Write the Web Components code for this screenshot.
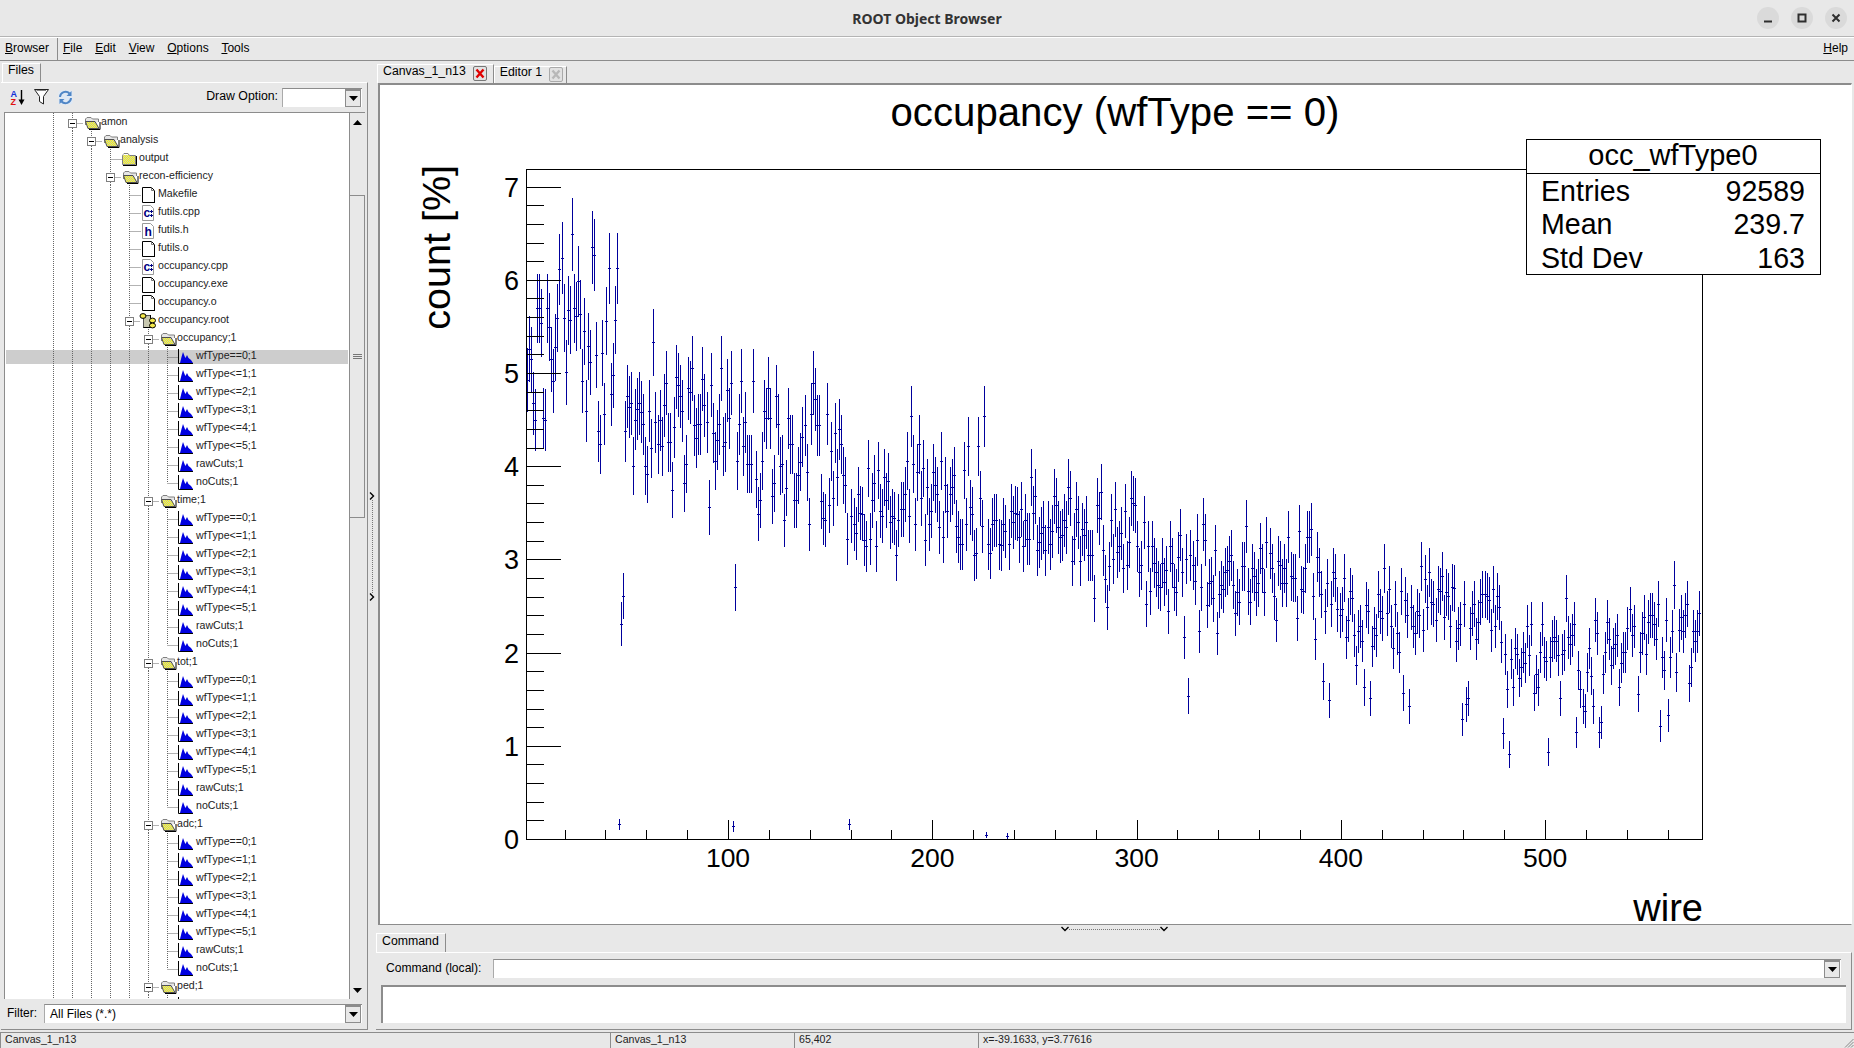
<!DOCTYPE html>
<html><head><meta charset="utf-8"><title>ROOT Object Browser</title>
<style>html,body{margin:0;padding:0;background:#e8e8e8;overflow:hidden}</style></head>
<body>
<x-window>
  <x-titlebar>ROOT Object Browser</x-titlebar>
  <x-menubar>
    <x-menu-item slot="first"><u>B</u>rowser</x-menu-item>
    <x-menu-item><u>F</u>ile</x-menu-item>
    <x-menu-item><u>E</u>dit</x-menu-item>
    <x-menu-item><u>V</u>iew</x-menu-item>
    <x-menu-item><u>O</u>ptions</x-menu-item>
    <x-menu-item><u>T</u>ools</x-menu-item>
    <x-menu-item slot="end"><u>H</u>elp</x-menu-item>
  </x-menubar>
  <x-workspace>
    <x-left-panel></x-left-panel>
    <x-vsplitter></x-vsplitter>
    <x-right-panel></x-right-panel>
  </x-workspace>
  <x-statusbar>
    <x-status-cell style="width:610px">Canvas_1_n13</x-status-cell>
    <x-status-cell style="width:184px">Canvas_1_n13</x-status-cell>
    <x-status-cell style="width:184px">65,402</x-status-cell>
    <x-status-cell style="flex:1">x=-39.1633, y=3.77616</x-status-cell>
  </x-statusbar>
</x-window>
<script>
const GRAY='#8c8c8c';
function def(name,html,init){
  customElements.define(name,class extends HTMLElement{
    constructor(){super();this.attachShadow({mode:'open'}).innerHTML=typeof html==='function'?html(this):html;}
    connectedCallback(){if(init&&!this._d){this._d=1;init(this);}}
  });
}
const TRI_DOWN='<svg width="9" height="5" viewBox="0 0 9 5"><path d="M0 0H9L4.5 5Z" fill="#000"/></svg>';
const TRI_UP='<svg width="9" height="5" viewBox="0 0 9 5"><path d="M0 5H9L4.5 0Z" fill="#000"/></svg>';

def('x-window',`<style>:host{display:flex;flex-direction:column;width:1854px;height:1048px;background:#e8e8e8;color:#000;font:12px "Liberation Sans",Arial,sans-serif;overflow:hidden}</style><slot></slot>`);

def('x-titlebar',`<style>
:host{display:flex;align-items:center;justify-content:center;height:36px;border-bottom:1px solid #b4b4b4;background:#e8e8e8;position:relative;box-sizing:content-box}
.t{font:bold 14px "Noto Sans",sans-serif;color:#333}
.w{position:absolute;right:7px;top:7px;display:flex;gap:12px}
.b{width:22px;height:22px;border-radius:50%;background:#dadada;display:flex;align-items:center;justify-content:center}
</style><span class="t"><slot></slot></span><div class="w">
<div class="b"><svg width="10" height="10"><path d="M1 8.5H9" stroke="#2e2e2e" stroke-width="2"/></svg></div>
<div class="b"><svg width="10" height="10"><rect x="1.5" y="1.5" width="7" height="7" fill="none" stroke="#2e2e2e" stroke-width="2"/></svg></div>
<div class="b"><svg width="10" height="10"><path d="M1.5 1.5L8.5 8.5M8.5 1.5L1.5 8.5" stroke="#2e2e2e" stroke-width="2"/></svg></div></div>`);

def('x-menubar',`<style>
:host{display:flex;align-items:center;height:20px;padding:0 6px 2px 5px;border-bottom:1px solid ${GRAY};border-top:1px solid #fff;box-sizing:content-box}
.f{display:flex;width:53px;height:22px;margin-bottom:-2px;padding-bottom:2px;box-sizing:border-box;align-items:center;border-right:1px solid ${GRAY};margin-right:5px}
.m{display:flex;gap:12.8px}.e{margin-left:auto}
</style><div class="f"><slot name="first"></slot></div><div class="m"><slot></slot></div><div class="e"><slot name="end"></slot></div>`);
def('x-menu-item',`<style>:host{display:block;line-height:16px;white-space:nowrap}</style><slot></slot>`);

def('x-workspace',`<style>:host{display:flex;height:969px;padding-bottom:2px;box-sizing:content-box}</style><slot></slot>`);

def('x-vsplitter',`<style>:host{display:flex;flex-direction:column;align-items:center;justify-content:center;width:8px;padding-top:1px;box-sizing:border-box}
i{display:block;height:93px;border-left:1px dotted #777}</style>
<svg width="6" height="8"><path d="M1 0.5L4.5 4L1 7.5" fill="none" stroke="#000" stroke-width="1.4"/></svg><i></i>
<svg width="6" height="8"><path d="M1 0.5L4.5 4L1 7.5" fill="none" stroke="#000" stroke-width="1.4"/></svg>`);
def('x-hsplitter',`<style>:host{display:flex;align-items:flex-start;justify-content:center;height:8px}
i{display:block;width:91px;border-top:1px dotted #777;margin-top:4px}svg{margin-top:1px}</style>
<svg width="8" height="6"><path d="M0.5 1L4 4.5L7.5 1" fill="none" stroke="#000" stroke-width="1.4"/></svg><i></i>
<svg width="8" height="6"><path d="M0.5 1L4 4.5L7.5 1" fill="none" stroke="#000" stroke-width="1.4"/></svg>`);

def('x-tab-strip',`<style>:host{display:flex;align-items:flex-end;height:22px;padding-left:var(--strip-pad,2px)}</style><slot></slot>`);
def('x-tab',el=>{const a=el.hasAttribute('active'),c=el.hasAttribute('close'),low=el.hasAttribute('low');return `<style>
:host{display:flex;align-items:flex-start;height:${a?18:16}px;padding:0 ${el.hasAttribute('tight')?'3px':'6px'} 0 5px;border-top:1px solid #fff;border-left:1px solid #fff;border-right:1px solid ${GRAY};box-sizing:content-box;white-space:nowrap;line-height:${low?15:a?13:11}px;font-size:12.3px}
svg{margin-left:7px;margin-top:${a?1:0}px;display:${c?'block':'none'}}
</style><slot></slot><svg width="14" height="15" viewBox="0 0 14 15"><rect x=".5" y=".5" width="13" height="14" rx="1.5" fill="#e2e2e2" stroke="${a?'#777':'#aaa'}"/><path d="M3.5 3.5L10.5 11.5M10.5 3.5L3.5 11.5" stroke="${a?'#e00000':'#b8b8b8'}" stroke-width="2.4"/></svg>`;});

def('x-combo',`<style>
:host{display:flex;align-items:center;height:18px;background:#fff;border-top:1px solid ${GRAY};border-left:1px solid #aaa;box-sizing:content-box;padding-left:5px;line-height:18px;white-space:nowrap}
.s{flex:1}
.b{width:14px;border:1px solid ${GRAY};border-top-width:2px;background:#e8e8e8;display:flex;align-items:center;justify-content:center;margin-right:1px;box-sizing:content-box;height:15px}
</style><span class="s"><slot></slot></span><span class="b">${TRI_DOWN}</span>`);

const AZ=`<svg width="15" height="17" viewBox="0 0 15 17"><text x="0.5" y="7.5" font-family="Liberation Sans" font-weight="bold" font-size="9" fill="#1530d8">A</text><text x="0.5" y="16" font-family="Liberation Sans" font-weight="bold" font-size="9" fill="#e01010">Z</text><path d="M11.5 1V11" stroke="#000" stroke-width="1.4"/><path d="M8.5 10.5H14.5L11.5 16Z" fill="#000"/></svg>`;
const FUNNEL=`<svg width="15" height="16" viewBox="0 0 15 16"><path d="M.5 .5H14.5L9.5 7.5V15L5.5 12.5V7.5Z" fill="#fff" stroke="#222"/><path d="M2.5 1.5H12" stroke="#888"/></svg>`;
const REFRESH=`<svg width="15" height="17" viewBox="0 0 15 17"><rect x=".5" y="1.5" width="14" height="14" rx="2" fill="#dfe9f5"/><path d="M2 8A5.5 5.5 0 0 1 11.5 4.5" fill="none" stroke="#4f86c6" stroke-width="2"/><path d="M13.5 2V7H8.5Z" fill="#4f86c6"/><path d="M13 9A5.5 5.5 0 0 1 3.5 12.5" fill="none" stroke="#4f86c6" stroke-width="2"/><path d="M1.5 15V10H6.5Z" fill="#4f86c6"/></svg>`;

def('x-left-panel',`<style>
:host{display:flex;flex-direction:column;width:368px;--strip-pad:2px}
.body{flex:1;display:flex;flex-direction:column;border-top:1px solid #fff;border-right:1px solid ${GRAY};border-bottom:1px solid ${GRAY};margin-left:1px;min-height:0}
.bar{display:flex;align-items:center;height:29px;padding:0 5px 1px 7px;box-sizing:border-box;}
.icons{display:flex;gap:9px;align-items:center;margin-left:2px}
.lab{margin-left:auto;margin-right:4px;margin-bottom:3px;font-size:12.3px}
x-combo{width:74px}
x-tree{flex:1;min-height:0;margin-left:3px;margin-right:2px}
.flt{display:flex;align-items:center;height:30px;padding:0 5px 2px 6px;box-sizing:border-box}
.flt span{margin-right:7px}
.flt x-combo{flex:1}
</style>
<x-tab-strip style="height:21px"><x-tab active>Files</x-tab></x-tab-strip>
<div class="body">
<div class="bar"><div class="icons">${AZ}${FUNNEL}${REFRESH}</div><span class="lab">Draw Option:</span><x-combo></x-combo></div>
<x-tree></x-tree>
<div class="flt"><span>Filter:</span><x-combo>All Files (*.*)</x-combo></div>
</div>`);

/* tree */
const D='url(#d)';
const icons={
 open:(x)=>`<g transform="translate(${x},3)"><path d="M1.5 9V3L3 1.5H7L8.5 3H14.5V6" fill="#e6e6e6" stroke="#808080"/><path d="M1.5 5.5H11L15 12.5H4Z" fill="${D}" stroke="#505050"/><path d="M5 13.5H16V6" fill="none" stroke="#000"/></g>`,
 closed:(x)=>`<g transform="translate(${x},3)"><path d="M.5 3.5L2 1.5H6L7.5 3.5H13.5V12.5H.5Z" fill="${D}" stroke="#808080"/><path d="M1.5 2.5H6" stroke="#fff"/><path d="M14.5 4V13.5H1" fill="none" stroke="#000"/></g>`,
 doc:(x)=>`<g transform="translate(${x},2)"><path d="M.5 .5H9.5L12.5 3.5V15.5H.5Z" fill="#fff" stroke="#000"/><path d="M9.5 .5V3.5H12.5" fill="none" stroke="#777"/><path d="M1 15.5H13" stroke="#000"/></g>`,
 c:(x)=>`<g transform="translate(${x},2)"><path d="M.5 .5H8.5L11.5 3.5V15.5H.5Z" fill="#fff" stroke="#999"/><text x="1.5" y="12" font-family="Liberation Sans" font-weight="bold" font-size="12" fill="#000080">c</text><path d="M8 6.5H11M9.5 5V8M8 10.5H11M9.5 9V12" stroke="#000080"/></g>`,
 h:(x)=>`<g transform="translate(${x},2)"><path d="M.5 .5H8.5L11.5 3.5V15.5H.5Z" fill="#fff" stroke="#999"/><text x="2.5" y="13" font-family="Liberation Sans" font-weight="bold" font-size="12" fill="#000080">h</text></g>`,
 hist:(x)=>`<g transform="translate(${x},0)"><path d="M2 16L3.5 10L5 5L6.5 9L7.5 11L9 8L10.5 11L13 13L15 16Z" fill="#0000e0"/><path d="M.5 2V16.5H15" fill="none" stroke="#000"/></g>`,
 root:(x)=>`<g transform="translate(${x},0)"><rect x="3.5" y="4.5" width="7" height="12" fill="#c8c8b0" stroke="#555"/><path d="M3.5 16.5H10.5V4" fill="none" stroke="#000"/><ellipse cx="3" cy="5" rx="3" ry="2.4" fill="#f4e84a" stroke="#000"/><ellipse cx="12.5" cy="9.5" rx="3" ry="2.4" fill="#f4e84a" stroke="#000"/><ellipse cx="12.5" cy="14.5" rx="3" ry="2.4" fill="#f4e84a" stroke="#000"/></g>`
};
const g=L=>72.5+19*L;
const rows=[];
const add=(L,icon,text,o={})=>rows.push({L,icon,text,...o});
add(0,'open','amon',{box:1});add(1,'open','analysis',{box:1});add(2,'closed','output');add(2,'open','recon-efficiency',{box:1});
add(3,'doc','Makefile');add(3,'c','futils.cpp');add(3,'h','futils.h');add(3,'doc','futils.o');add(3,'c','occupancy.cpp');add(3,'doc','occupancy.exe');add(3,'doc','occupancy.o');
add(3,'root','occupancy.root',{box:1});
const hs=['wfType==0;1','wfType<=1;1','wfType<=2;1','wfType<=3;1','wfType<=4;1','wfType<=5;1','rawCuts;1','noCuts;1'];
['occupancy;1','time;1','tot;1','adc;1'].forEach((n,k)=>{
  add(4,'open',n,{box:1});
  hs.forEach((h,i)=>add(5,'hist',h,{last:i==7,sel:k==0&&i==0}));
});
add(4,'open','ped;1',{box:1});
add(5,'hist','');
function rowHTML(r){
  const own=g(r.L), tx=Math.floor(own)+29;
  let s='';
  for(let i=-1;i<r.L;i++){const x=g(i);s+=`<path d="M${x} 0V18" class="g"/>`;}
  const ox=own;
  if(r.box){
    s+=`<path d="M${ox} 0V6M${ox} 15V18" class="g"/>`;
    s+=`<path d="M${ox+5} 10.5H${ox+11}" class="g"/>`;
    s+=`<rect x="${ox-4}" y="6.5" width="8" height="8" fill="#fff" stroke="#808080"/><path d="M${ox-2.5} 10.5H${ox+2.5}" stroke="#000"/>`;
  }else{
    s+=`<path d="M${ox} 0V${r.last?10:18}" class="g"/><path d="M${ox} 10.5H${ox+11}" class="g"/>`;
  }
  const ix=Math.floor(own)+({open:12,closed:12,doc:13,c:13,h:13,hist:11,root:11}[r.icon]);
  s+=icons[r.icon](ix);
  return `<div class="r${r.sel?' sel':''}"><svg width="${tx-5}" height="18" viewBox="5 0 ${tx-5} 18">${s}</svg>${r.text?`<span>${r.text.replace(/</g,'&lt;')}</span>`:''}</div>`;
}
def('x-tree',`<style>
:host{display:flex;border-top:1px solid ${GRAY};border-left:1px solid ${GRAY};background:#e8e8e8;font-size:10.6px;overflow:hidden}
.v{flex:1;background:#fff;overflow:hidden;min-width:0}
.r{display:flex;height:18px;white-space:nowrap;align-items:flex-start;line-height:16px}
.r svg{flex:none;display:block}
.r span{color:#222}
.sel{background:linear-gradient(#cdcdcd,#cdcdcd) 1px 3px/342px 14px no-repeat}
.g{stroke:#666;stroke-dasharray:1 1;fill:none}
.sb{width:15px;flex:none;border-left:1px solid ${GRAY};display:flex;flex-direction:column;box-sizing:content-box}
.a{height:18px;display:flex;align-items:center;justify-content:center;flex:none}
.th{height:323px;margin-top:64px;flex:none;border:1px solid ${GRAY};border-width:1px 1px 1px 0;box-sizing:border-box;display:flex;flex-direction:column;justify-content:center;align-items:center;gap:1px;width:15px}
.th i{display:block;width:9px;height:1px;background:#777}
.sp{flex:1}
</style>
<div class="v"><svg width="0" height="0" style="position:absolute"><defs><pattern id="d" width="2" height="2" patternUnits="userSpaceOnUse"><rect width="2" height="2" fill="#ffff00"/><rect width="1" height="1" fill="#c4c4c4"/><rect x="1" y="1" width="1" height="1" fill="#c4c4c4"/></pattern></defs></svg>${rows.map(rowHTML).join('')}</div>
<div class="sb"><div class="a">${TRI_UP}</div><div class="th"><i></i><i></i><i></i></div><div class="sp"></div><div class="a">${TRI_DOWN}</div></div>`);

def('x-right-panel',`<style>
:host{display:flex;flex-direction:column;width:1476px;--strip-pad:1px}
x-plot{height:842px;flex:none;margin-left:2px}
.cmd{flex:1;display:flex;flex-direction:column;border-top:1px solid #fff;border-right:1px solid ${GRAY};border-bottom:1px solid ${GRAY};min-height:0}
.l{display:flex;align-items:center;height:32px;padding:0 10px 2px 10px;box-sizing:border-box}
.l span{margin-right:12px;font-size:12.1px}
.l x-combo{flex:1}
.ta{height:38px;margin:0 5px 0 5px;background:#fff;border-top:2px solid ${GRAY};border-left:2px solid ${GRAY};box-sizing:border-box}
.strip2{--strip-pad:0px;height:19px}
</style>
<x-tab-strip style="height:22px"><x-tab active close>Canvas_1_n13</x-tab><x-tab close tight>Editor 1</x-tab></x-tab-strip>
<x-plot></x-plot>
<x-hsplitter></x-hsplitter>
<x-tab-strip class="strip2"><x-tab active low>Command</x-tab></x-tab-strip>
<div class="cmd"><div class="l"><span>Command (local):</span><x-combo></x-combo></div><div class="ta"></div></div>`);

/* histogram data read from the picture */
const z5="82:660,88:568,94:598,100:730,106:780,112:445,118:445,124:490,130:775,136:780,142:445,148:502,157:598,163:663,169:562,175:475,181:328,187:295,193:475,199:637,205:451,211:481,217:223,223:445,229:469,235:364,241:463,247:664,253:514,259:754,265:559,271:607,277:262,283:286,289:586,295:814,304:853,310:580,316:763,322:484,328:325,334:703,340:646,346:481,352:325,376:814,382:709,388:742,394:730,400:865,412:748,418:730,424:757,430:793,450:754,456:865,462:547,469:787,475:853,481:781,487:859,493:736,499:670,505:847,511:847,523:802,529:652,535:676,541:709,547:754,565:685,571:697,577:625,583:796,589:835,598:793,604:793,610:658,616:736,622:787,634:676,640:820,646:841,652:841,658:793,664:625,670:859,676:847,682:691,688:775,694:670,718:793,724:664,730:859,736:787,745:835,751:835,757:757,799:775,805:685,811:775,829:709,835:793,865:775,871:853,877:853,904:754,910:832,916:796,934:763,940:670,946:718,952:796,958:796,982:763,994:874,1006:820,1018:808,1024:853";
const z6="400:19,436:19,442:43,517:91,553:70,559:13,628:142,646:4,712:4,745:13,751:13,757:13,769:58,775:163,781:121,787:4,817:109,823:70,841:19,847:13,853:181,859:85,883:121,889:121,895:46,901:7,921:37,928:193,964:124,970:175,976:181,988:136,1000:115,1012:52,1030:46,1039:76,1045:238,1057:169,1063:193,1069:220,1075:103,1081:160,1087:163,1093:241,1099:259,1105:25,1111:238,1117:121,1123:70,1129:259,1135:31,1141:154,1147:169,1153:52,1159:121,1165:64,1171:187,1177:169,1183:175,1192:286,1198:181,358:1093,364:493,370:408,700:1099,706:382,1051:1093";
const z7="0:360,4:328,10:328,16:283,22:184,28:349,34:49,40:193,46:373,52:217,58:133,64:295,70:205,76:421,82:262,88:373,94:334,100:217,106:256,112:283,118:382,124:184,127:184,133:412,139:256,145:334,151:283,157:262,163:226,169:379,175:412,181:433,187:433,193:211,199:373,205:139,211:322,217:343,223:466,229:460,235:139,241:295,247:379,253:49,265:433,271:460,281:373,286:361,292:361,298:433,304:436,310:373,316:394,328:433,334:334,340:367,346:340,352:343,358:412,364:328,370:439,376:361,382:418,388:418,394:232,400:340,406:289,412:451,418:427,424:427,428:400,433:382,439:451,445:382,451:433,457:394,463:289,469:316,475:382,481:412,487:406,493:361,499:382,505:262,511:295,517:484,523:418,529:328,535:367,541:484,547:388,553:406,559:367,565:466,574:466,580:466,586:595,592:316,598:355,604:277,610:451,616:538,622:622,628:499,634:361,640:478,646:328,652:457,658:439,664:400,670:505,676:334,682:496,688:427,694:295,700:310,706:316,712:439,718:517,724:496,733:367,739:613,745:439,751:574,757:439,763:490,769:517,775:556,781:562,787:490,793:547,799:511,805:634,811:439,817:490,823:562,829:577,835:472,841:406,847:517,853:712,859:478,868:889,874:466,880:496,886:544,892:421,898:694,904:562,910:373,916:421,922:616,928:550,934:544,940:595,946:451,952:700,958:583,964:556,970:568,976:517,982:511,988:484,994:466,1000:556,1006:640,1012:577,1018:607,1024:499,1030:499,1039:379,1045:574,1051:607,1057:505,1063:529,1069:577,1075:550,1081:445,1087:505,1093:577,1099:427,1111:460,1117:505,1123:589,1129:661,1135:484,1141:496,1147:550,1153:505,1162:550,1168:412,1174:529,1180:535,1186:535,1192:655,1198:394";
const z8="4:268,10:272,16:205,22:112,28:112,34:88,40:289,46:418,52:172,58:217,64:283,70:544,76:334,82:250,88:601,94:313,100:217,106:235,115:328,121:346,127:328,133:235,139:412,145:361,151:274,157:295,163:406,169:496,175:394,181:379,187:424,193:562,199:316,205:334,211:595,217:439,223:385,229:406,235:283,241:334,247:355,256:205,262:340,268:268,274:379,280:445,286:313,292:400,298:457,304:274,310:580,316:301,322:346,328:619,334:322,340:379,346:400,352:334,358:346,364:199,370:391,376:238,382:322,388:217,394:307,400:313,409:361,415:268,421:274,427:229,433:352,439:277,445:289,451:379,457:262,463:265,469:424,475:385,481:373,487:658,493:313,499:613,505:595,511:385,517:340,523:313,529:418,535:367,541:307,547:283,553:283,559:289,565:301,574:391,580:268,586:379,592:289,598:322,604:427,610:700,616:463,622:568,628:763,634:478,640:562,646:445,652:463,658:535,664:502,670:457,676:490,682:379,688:466,694:373,703:580,709:523,715:562,721:457,727:373,733:472,739:484,745:757,751:472,757:424,763:412,769:424,775:466,781:595,787:463,793:451,799:295,805:412,811:433,817:406,823:373,829:697,835:511,841:568,847:568,851:619,856:634,862:517,868:445,874:529,880:619,886:361,892:400,898:697,904:667,910:523,916:457,922:367,928:418,934:496,940:445,946:433,952:406,958:562,964:490,970:457,976:457,982:385,988:328,997:406,1003:379,1012:583,1018:583,1021:457,1027:400,1033:352,1039:463,1045:367,1051:346,1057:346,1063:373,1069:418,1075:313,1081:679,1087:472,1093:511,1099:361,1105:646,1111:472,1117:394,1123:256,1129:517,1135:391,1141:352,1147:394,1153:346,1159:313,1168:550,1174:502,1180:394,1186:424,1192:394,1198:340";
const BINW=2.042,X0=526.3,Y0=839,U=93.2;
function binsData(){
  const b=new Array(576).fill(null);
  const put=(x,y)=>{const i=Math.round((x-X0)/BINW-.5);if(i>=0&&i<576)b[i]=y;};
  const rd=(s,ox,oy)=>s.split(',').forEach(p=>{const[a,c]=p.split(':').map(Number);put(ox+a/3,oy+c/3);});
  rd(z5,500,160);rd(z6,500,460);rd(z7,900,400);rd(z8,1300,500);
  put(986,835);put(1007,836);
  let seed=12345;const rnd=()=>{seed=(seed*1103515245+12345)&0x7fffffff;return seed/0x7fffffff;};
  for(let i=0;i<576;i++){
    if(b[i]!==null)continue;
    const x=X0+(i+.5)*BINW;
    if(x>=900)continue;
    if(x>612&&x<626)continue;
    const base=x<612?5.4:x<770?4.45:4.0;
    const v=base+(rnd()+rnd()+rnd()-1.5)*0.55;
    b[i]=Y0-v*U;
  }
  return b;
}
function plotSVG(){
  const Xw=w=>523.7+2.043*w, L=526.5,R=1702.5,T=169.5,B=839.5;
  let ax=`M${L} ${T}H${R}V${B}H${L}Z`;
  for(let k=0;k<=35;k++){const y=Math.round(Y0-k*U/5)+.5;if(y<T)break;ax+=`M${L} ${y}H${L+(k%5?17:34)}`;}
  for(let w=20;w<=560;w+=20){const x=Math.round(Xw(w))+.5;ax+=`M${x} ${B}V${B-(w%100?10:20)}`;}
  let er='';
  binsData().forEach((y,i)=>{
    if(y===null)return;
    const v=Math.max(.02,(Y0-y)/U),h=14.45*Math.sqrt(v);
    const x=Math.floor(X0+(i+.5)*BINW)+.5,yy=Math.round(y)+.5;
    er+=`M${x} ${Math.round(y-h)}V${Math.min(Math.round(y+h),839)}M${x-1.5} ${yy}H${x+1.5}`;
  });
  let tx='';
  for(let k=0;k<=7;k++)tx+=`<text x="519" y="${Y0-k*U+10}" text-anchor="end" font-size="27">${k}</text>`;
  for(let w=100;w<=500;w+=100)tx+=`<text x="${Xw(w)}" y="867" text-anchor="middle" font-size="26.5">${w}</text>`;
  return `<svg viewBox="380 85 1471 840" width="1471" height="840" font-family="Liberation Sans, Arial, sans-serif" fill="#000" style="overflow:visible">
  <path d="${er}" stroke="#00009c" stroke-width="1" fill="none" shape-rendering="crispEdges"/>
  <path d="${ax}" stroke="#000" stroke-width="1" fill="none" shape-rendering="crispEdges"/>
  ${tx}
  <text x="1115" y="126" text-anchor="middle" font-size="40.2">occupancy (wfType == 0)</text>
  <text x="1703" y="921" text-anchor="end" font-size="38">wire</text>
  <text transform="translate(450,165) rotate(-90)" text-anchor="end" font-size="39.5">count [%]</text>
  <rect x="1526.5" y="139.5" width="294" height="135" fill="#fff" stroke="#000" shape-rendering="crispEdges"/>
  <path d="M1526.5 173.5H1820.5" stroke="#000" shape-rendering="crispEdges"/>
  <text x="1673" y="165" text-anchor="middle" font-size="29">occ_wfType0</text>
  <text x="1541" y="201" font-size="28.6">Entries</text><text x="1805" y="201" text-anchor="end" font-size="28.6">92589</text>
  <text x="1541" y="234" font-size="28.6">Mean</text><text x="1805" y="234" text-anchor="end" font-size="28.6">239.7</text>
  <text x="1541" y="268" font-size="28.6">Std Dev</text><text x="1805" y="268" text-anchor="end" font-size="28.6">163</text>
  </svg>`;
}
def('x-plot',()=>`<style>:host{display:block;background:#fff;border-top:2px solid ${GRAY};border-left:2px solid ${GRAY};border-right:1px solid #fff;border-bottom:1px solid ${GRAY};box-sizing:border-box}svg{display:block}</style>${plotSVG()}`);

def('x-statusbar',`<style>:host{display:flex;height:16px;position:relative}
svg{position:absolute;right:0;bottom:0}</style><slot></slot><svg width="12" height="12"><path d="M11.5 3L3 11.5M11.5 6L6 11.5M11.5 9L9 11.5" stroke="#888"/></svg>`);
def('x-status-cell',`<style>:host{display:block;box-sizing:border-box;border-top:1px solid ${GRAY};border-left:1px solid ${GRAY};padding-left:4px;font-size:10.6px;line-height:12px;white-space:nowrap;color:#222}</style><slot></slot>`);
</script>
</body></html>
